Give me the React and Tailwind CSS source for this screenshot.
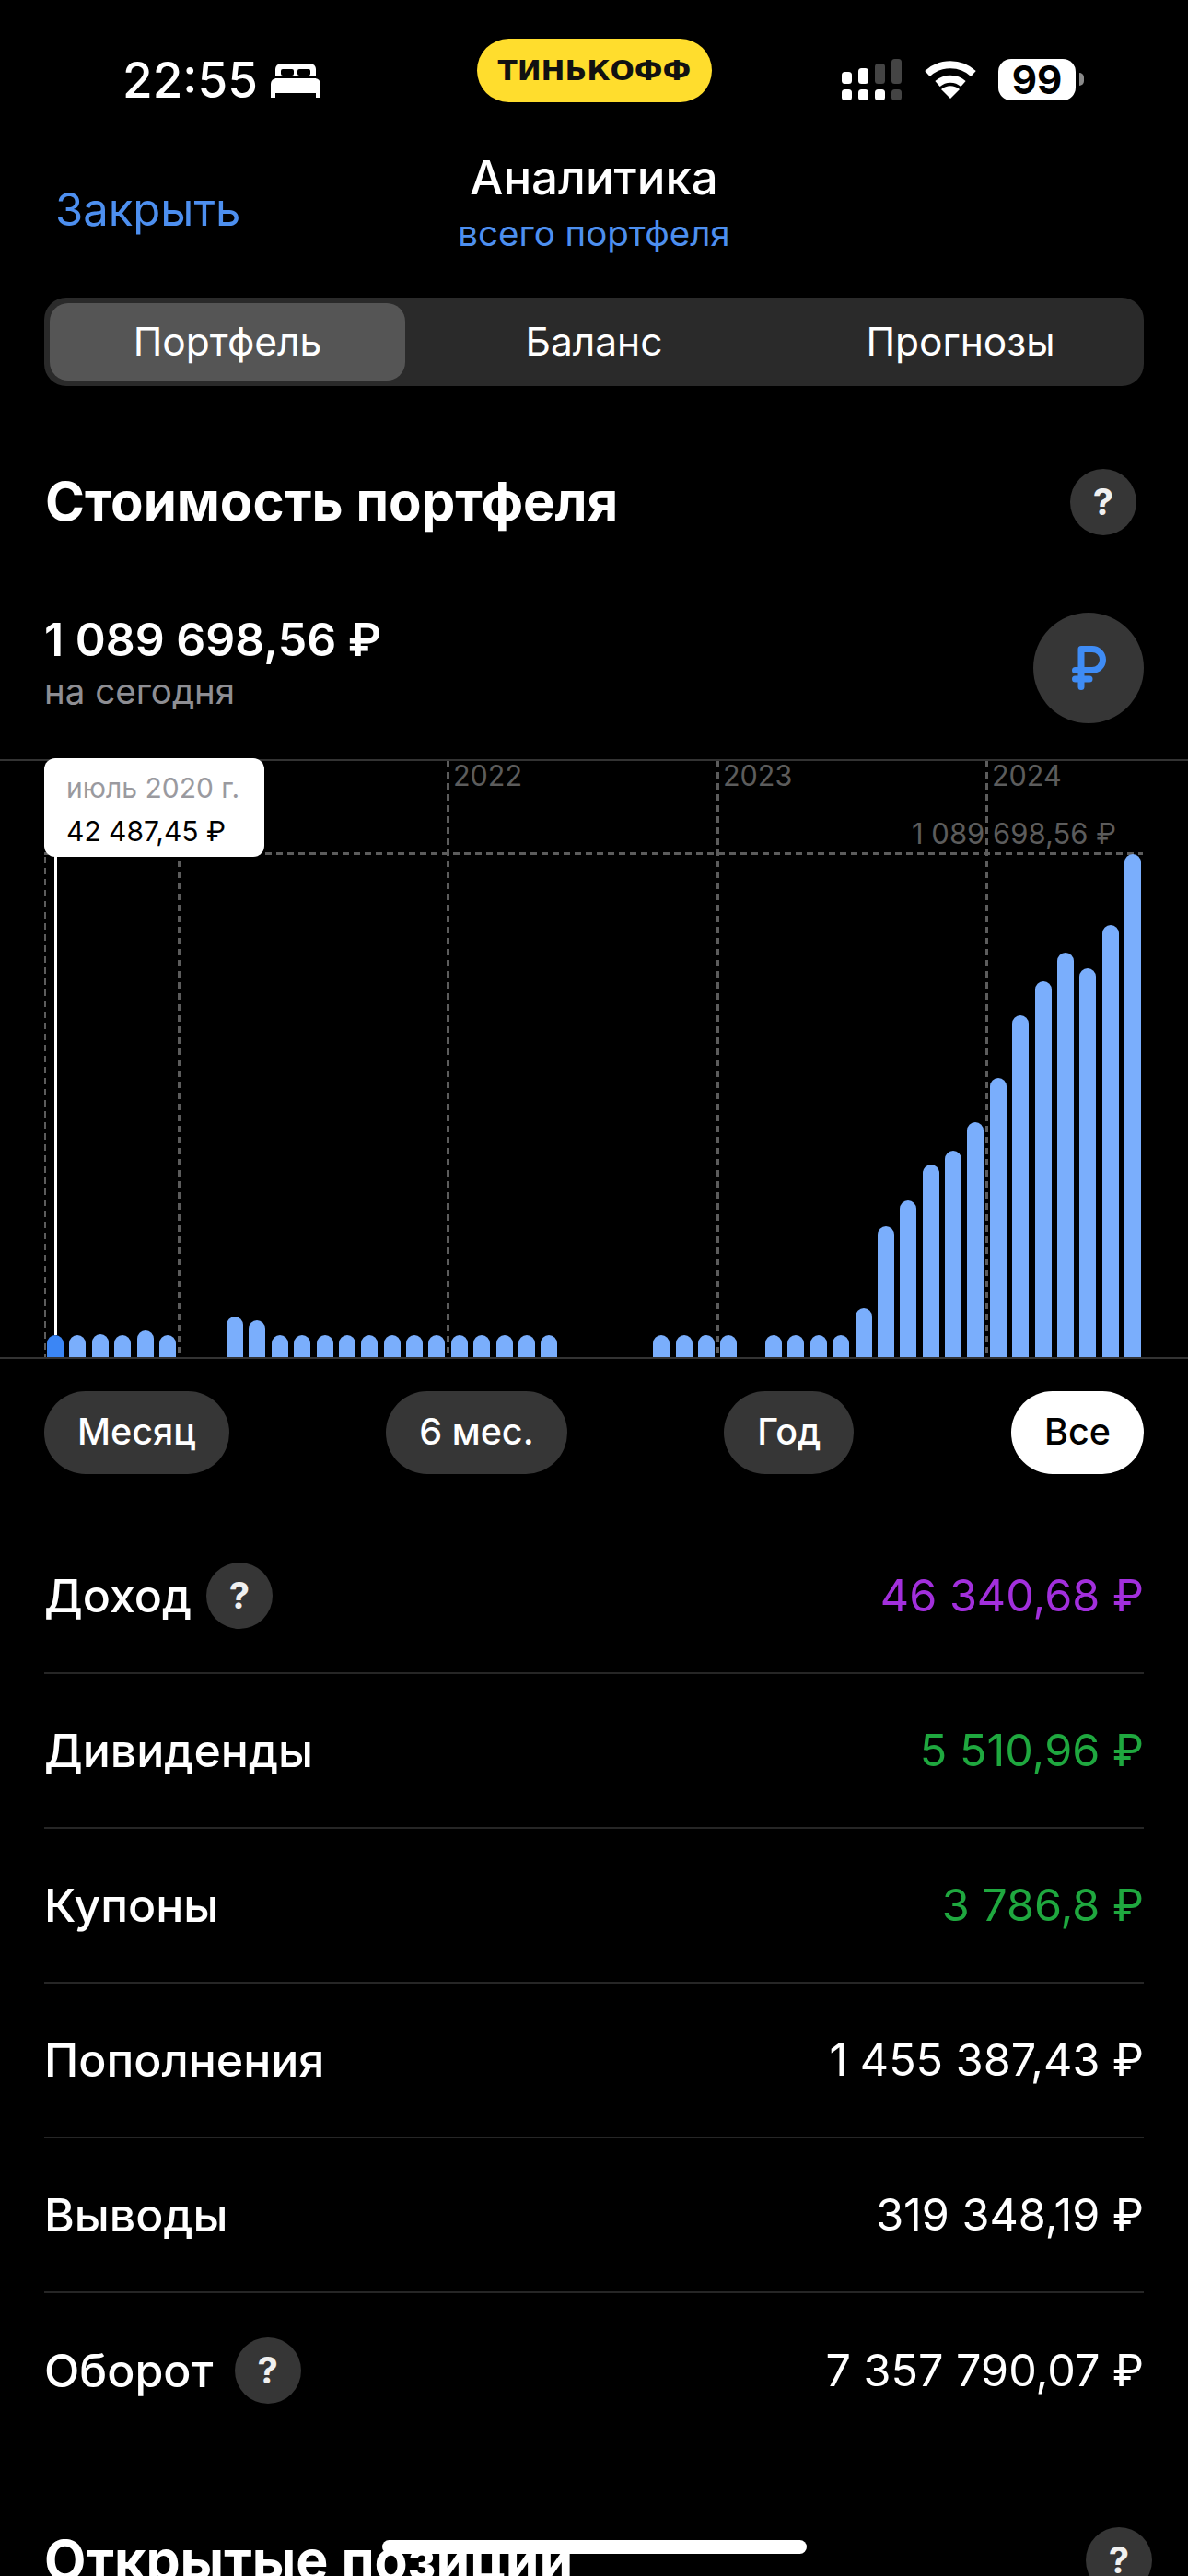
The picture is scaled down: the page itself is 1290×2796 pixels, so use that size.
import { Fragment } from 'react';

// top edge of every bar in page px, 0 = empty slot in the chart
const BASE = 1473;
const tops = [
  1449, 1449, 1448, 1449, 1444, 1449, 0, 0, 1429, 1433,
  1449, 1449, 1449, 1449, 1449, 1449, 1449, 1449, 1449, 1449, 1449, 1449, 1449,
  0, 0, 0, 0,
  1449, 1449, 1449, 1449, 0,
  1449, 1449, 1449, 1449, 1420, 1331, 1303, 1264, 1249, 1218, 1170, 1102, 1065, 1034, 1051, 1004, 927,
];

const rows = [
  { label: 'Доход', value: '46 340,68 ₽', color: 'text-[#a22fdc]', help: true, gap: 'gap-[16px]' },
  { label: 'Дивиденды', value: '5 510,96 ₽', color: 'text-[#1fa83f]' },
  { label: 'Купоны', value: '3 786,8 ₽', color: 'text-[#1fa83f]' },
  { label: 'Пополнения', value: '1 455 387,43 ₽', color: 'text-white' },
  { label: 'Выводы', value: '319 348,19 ₽', color: 'text-white' },
  { label: 'Оборот', value: '7 357 790,07 ₽', color: 'text-white', help: true, gap: 'gap-[23px]' },
];

const ranges = ['Месяц', '6 мес.', 'Год', 'Все'];

const HelpButton = () => (
  <div className="flex h-[72px] w-[72px] shrink-0 items-center justify-center rounded-full bg-[#363636] text-[40px] font-bold text-[#f0f0f0]">
    ?
  </div>
);

const BedIcon = () => (
  <svg width="54" height="37" viewBox="0 0 54 37" className="ml-[14px]">
    <path d="M5 6a6 6 0 0 1 6-6h32a6 6 0 0 1 6 6v12H5z" fill="#fff" />
    <rect x="11" y="6" width="14" height="7" rx="2" fill="#000" />
    <rect x="29" y="6" width="14" height="7" rx="2" fill="#000" />
    <path d="M5 13h44v3H5z" fill="#000" />
    <path d="M0 22a6 6 0 0 1 6-6h42a6 6 0 0 1 6 6v15h-5v-5H5v5H0z" fill="#fff" />
  </svg>
);

const SignalIcon = () => (
  <svg width="66" height="46" viewBox="0 0 66 46">
    <rect x="0" y="14" width="11" height="13" rx="3.5" fill="#fff" />
    <rect x="18" y="10" width="11" height="17" rx="3.5" fill="#fff" />
    <rect x="36" y="5" width="11" height="22" rx="3.5" fill="#444" />
    <rect x="54" y="0" width="11" height="27" rx="3.5" fill="#444" />
    <rect x="0" y="33" width="11" height="12" rx="3.5" fill="#fff" />
    <rect x="18" y="33" width="11" height="12" rx="3.5" fill="#fff" />
    <rect x="36" y="33" width="11" height="12" rx="3.5" fill="#fff" />
    <rect x="54" y="33" width="11" height="12" rx="3.5" fill="#444" />
  </svg>
);

const WifiIcon = () => (
  <svg width="58" height="42" viewBox="0 0 58 42" fill="none">
    <path d="M4 15C18 2 40 2 54 15" stroke="#fff" strokeWidth="8" />
    <path d="M15 26c8-7 20-7 28 0" stroke="#fff" strokeWidth="8" />
    <path d="M19 32c6-5 14-5 20 0L29 42z" fill="#fff" />
  </svg>
);

export default function App() {
  return (
    <div className="relative h-[2796px] w-[1290px] overflow-hidden bg-black font-['Inter',sans-serif] text-white">
      {/* Status bar */}
      <div className="relative flex h-[150px] items-start">
        <div className="ml-[133px] mt-[59px] flex items-center">
          <span className="text-[53px] font-medium leading-[56px]">22:55</span>
          <BedIcon />
        </div>
        <div className="ml-[170px] mt-[42px] flex h-[69px] w-[255px] items-center justify-center rounded-full bg-[#ffdd2d] font-['DejaVu_Sans',sans-serif] text-[31px] font-bold text-[#111]">
          ТИНЬКОФФ
        </div>
        <div className="ml-auto mr-[113px] mt-[64px] flex items-start">
          <SignalIcon />
          <div className="ml-[23px] mt-[1px]">
            <WifiIcon />
          </div>
          <div className="ml-[23px] flex h-[45px] w-[84px] items-center justify-center rounded-[14px] bg-white text-[42px] font-bold leading-none text-black">
            99
          </div>
          <div className="ml-[4px] mt-[15px] h-[14px] w-[5px] rounded-r-full bg-[#8a8a8a]" />
        </div>
      </div>

      {/* Nav */}
      <div className="relative flex h-[130px] flex-col items-center">
        <div className="mt-[20px] text-[51px] font-medium leading-[46px]">Аналитика</div>
        <div className="mt-[15px] text-[38.5px] leading-[44px] text-[#4d8fef]">всего портфеля</div>
        <div className="absolute left-[60px] top-[50px] text-[49px] leading-[56px] text-[#4d8fef]">Закрыть</div>
      </div>

      {/* Tabs */}
      <div className="mx-[48px] mt-[43px] flex h-[96px] items-center rounded-[24px] bg-[#2a2a2a] px-[6px] text-[42.5px]">
        <div className="flex h-[84px] w-[386px] items-center justify-center rounded-[20px] bg-[#555555]">Портфель</div>
        <div className="flex flex-1 items-center justify-center">Баланс</div>
        <div className="flex w-[386px] items-center justify-center">Прогнозы</div>
      </div>

      {/* Portfolio value */}
      <div className="mx-[48px] mt-[90px] flex h-[72px] items-center justify-between">
        <div className="mb-[2px] ml-[1px] text-[58px] font-bold">Стоимость портфеля</div>
        <div className="mr-[8px]">
          <HelpButton />
        </div>
      </div>
      <div className="mx-[48px] mt-[84px] flex h-[120px] items-start justify-between">
        <div>
          <div className="mt-[1px] text-[50px] font-semibold leading-[56px]">1 089 698,56 ₽</div>
          <div className="mt-[6px] text-[38.5px] leading-[44px] text-[#8e8e93]">на сегодня</div>
        </div>
        <div className="flex h-[120px] w-[120px] items-center justify-center rounded-full bg-[#363636]">
          <svg width="37" height="48" viewBox="0 0 37 48" fill="none" stroke="#3f8cf5" strokeWidth="7" strokeLinecap="round" strokeLinejoin="round">
            <path d="M10 3.500V44.500M10 3.500h12a11.500 11.500 0 0 1 0 23H3.500M3.500 36H19" />
          </svg>
        </div>
      </div>

      {/* Chart */}
      <div className="relative mt-[39px] h-[651px] border-y-2 border-[#333333]">
        {[194, 486, 779, 1071].map((x) => (
          <div
            key={x}
            className="absolute top-0 bottom-0 w-[3px] bg-[repeating-linear-gradient(to_bottom,#5c5c5c_0_7px,transparent_7px_12px)]"
            style={{ left: x - 1 }}
          />
        ))}
        <div className="absolute left-[48px] top-[104px] bottom-0 w-[2px] bg-[repeating-linear-gradient(to_bottom,#5c5c5c_0_7px,transparent_7px_12px)]" />
        <div className="absolute left-[48px] top-[99px] h-[3px] w-[1193px] bg-[repeating-linear-gradient(to_right,#5c5c5c_0_7px,transparent_7px_12px)]" />
        {[
          ['2022', 'left-[492px]'],
          ['2023', 'left-[785px]'],
          ['2024', 'left-[1077px]'],
        ].map(([year, pos]) => (
          <div key={year} className={`absolute top-0 text-[30.5px] leading-[32px] text-[#5c5c5c] ${pos}`}>
            {year}
          </div>
        ))}
        <div className="absolute left-[990px] top-[61px] text-[31px] leading-[36px] text-[#5c5c5c]">1 089 698,56 ₽</div>

        <div className="ml-[51px] flex h-full w-[1188px] items-end justify-between">
          {tops.map((top, i) => (
            <div
              key={i}
              className={`relative w-[18px] rounded-t-[9px] ${i === 0 ? 'bg-[#3b86f5]' : 'bg-[#7aaefc]'}`}
              style={{ height: top ? BASE - top : 0 }}
            />
          ))}
        </div>

        <div className="absolute left-[59px] top-[100px] bottom-[24px] w-[3px] bg-white" />
        <div className="absolute left-[48px] top-[-3px] h-[107px] w-[239px] rounded-[12px] bg-white px-[24px] pt-[12px]">
          <div className="text-[30px] leading-[40px] text-[#9a9a9f]">июль 2020 г.</div>
          <div className="mt-[7px] text-[30px] leading-[40px] text-black">42 487,45 ₽</div>
        </div>
      </div>

      {/* Ranges */}
      <div className="mx-[48px] mt-[35px] flex items-center justify-between">
        {ranges.map((r) => (
          <div
            key={r}
            className={`flex h-[90px] items-center rounded-full px-[36px] text-[39.500px] font-medium ${
              r === 'Все' ? 'bg-white text-black' : 'bg-[#363636] text-white'
            }`}
          >
            {r}
          </div>
        ))}
      </div>

      {/* Totals */}
      <div className="mx-[48px] mt-[49px]">
        {rows.map((row, i) => (
          <Fragment key={row.label}>
            <div className={`flex h-[168px] items-center justify-between ${i < rows.length - 1 ? 'border-b-2 border-[#262626]' : ''}`}>
              <div className={`flex items-center ${row.gap || ''}`}>
                <span className="text-[50px] font-medium">{row.label}</span>
                {row.help && <HelpButton />}
              </div>
              <span className={`text-[48.500px] ${row.color}`}>{row.value}</span>
            </div>
          </Fragment>
        ))}
      </div>

      {/* Next section, cut off by the screen */}
      <div className="mx-[48px] mt-[86px] flex h-[72px] items-center justify-between">
        <div className="text-[59px] font-bold">Открытые позиции</div>
        <div className="mr-[-9px]">
          <HelpButton />
        </div>
      </div>

      {/* Home indicator */}
      <div className="absolute left-[415px] top-[2757px] h-[15px] w-[461px] rounded-full bg-white" />
    </div>
  );
}
